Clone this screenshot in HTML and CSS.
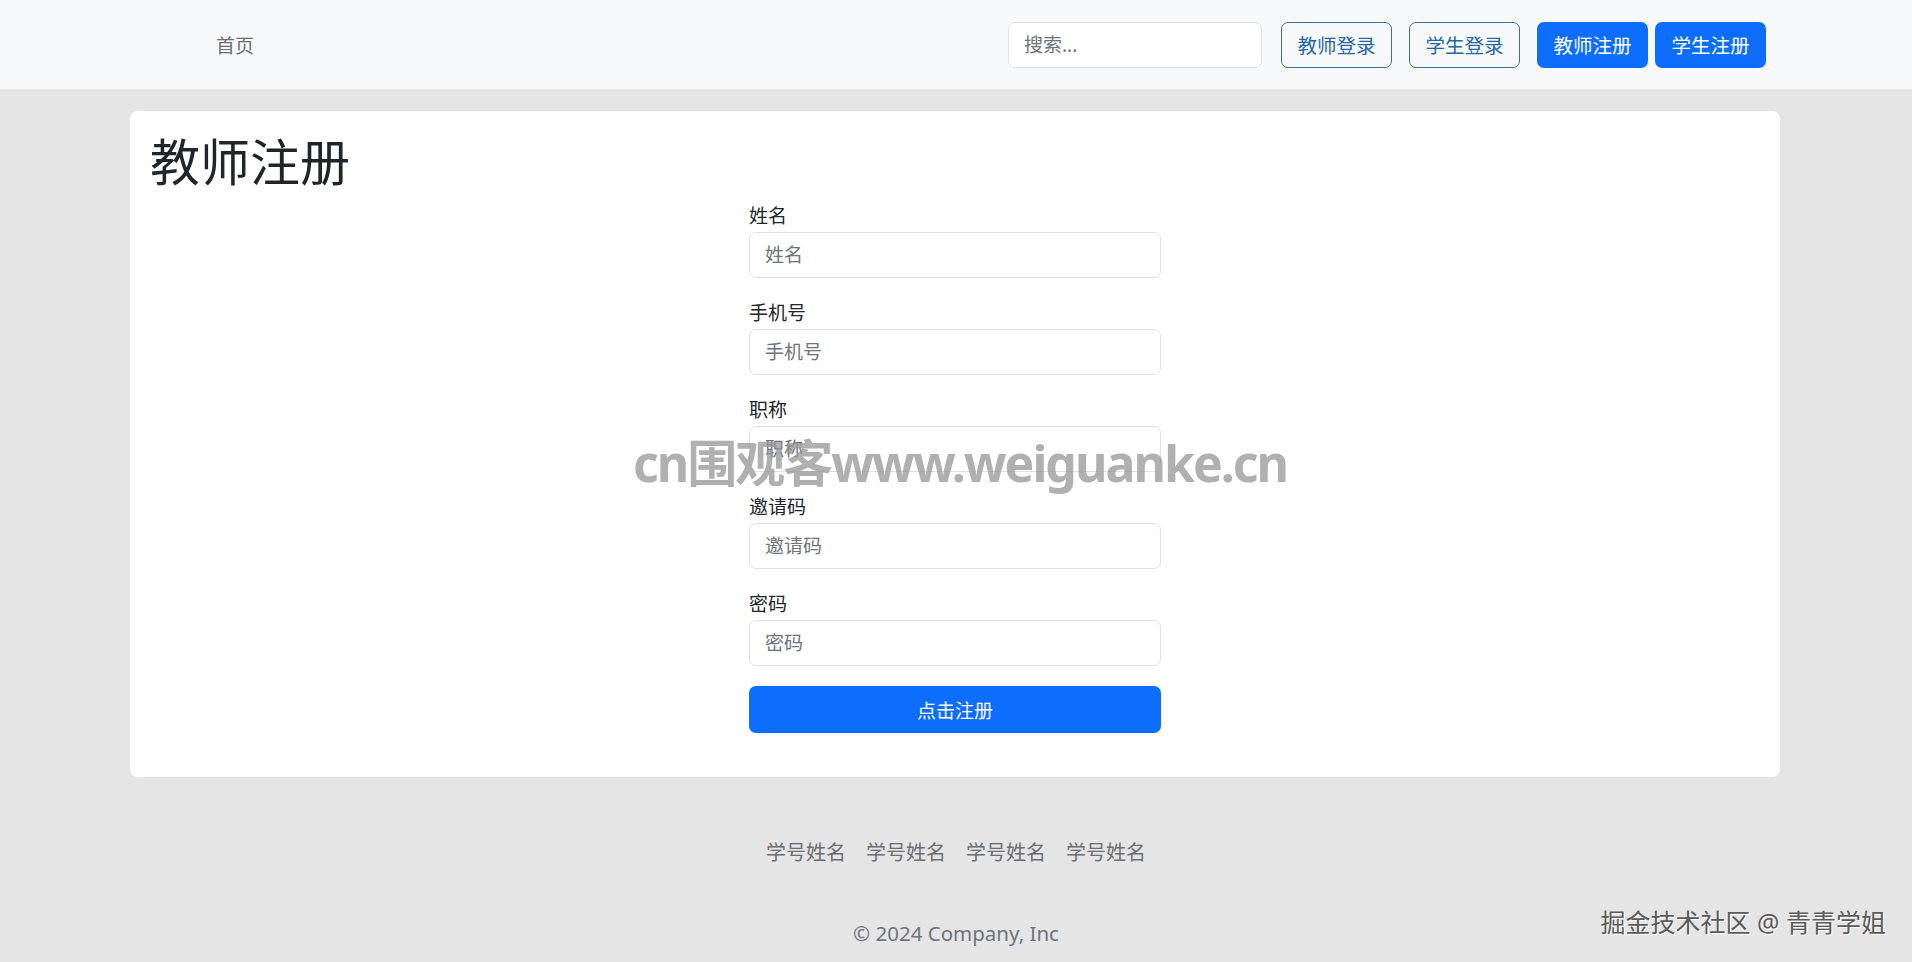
FILE: index.html
```html
<!DOCTYPE html>
<html lang="zh-CN">
<head>
  <meta charset="UTF-8">
  <meta name="viewport" content="width=device-width, initial-scale=1">
  <title>教师注册</title>
  <link rel="stylesheet" href="styles.css">
</head>
<body>

  <!-- 顶部导航 -->
  <header class="navbar">
    <a class="nav-home" href="#">首页</a>
    <div class="nav-right">
      <input class="search" type="search" placeholder="搜索...">
      <a class="btn btn-outline" href="#">教师登录</a>
      <a class="btn btn-outline" href="#">学生登录</a>
      <a class="btn btn-primary btn-tight" href="#">教师注册</a>
      <a class="btn btn-primary" href="#">学生注册</a>
    </div>
  </header>

  <main class="card">
    <h1>教师注册</h1>
    <form class="register-form">
      <div class="field">
        <label for="name">姓名</label>
        <input type="text" id="name" placeholder="姓名">
      </div>
      <div class="field">
        <label for="phone">手机号</label>
        <input type="text" id="phone" placeholder="手机号">
      </div>
      <div class="field">
        <label for="title">职称</label>
        <input type="text" id="title" placeholder="职称">
      </div>
      <div class="field">
        <label for="code">邀请码</label>
        <input type="text" id="code" placeholder="邀请码">
      </div>
      <div class="field">
        <label for="pwd">密码</label>
        <input type="password" id="pwd" placeholder="密码">
      </div>
      <button type="submit" class="submit-btn">点击注册</button>
    </form>
  </main>

  <footer class="footer">
    <ul class="footer-links">
      <li><a href="#">学号姓名</a></li>
      <li><a href="#">学号姓名</a></li>
      <li><a href="#">学号姓名</a></li>
      <li><a href="#">学号姓名</a></li>
    </ul>
    <p class="copyright">© 2024 Company, Inc</p>
  </footer>

  <!-- 截图水印 -->
  <div class="watermark">cn围观客www.weiguanke.cn</div>
  <div class="corner-mark">掘金技术社区 @ 青青学姐</div>

</body>
</html>
```

FILE: styles.css
```css
body {
  margin: 0;
  background: #e5e5e5;
  font-family: "Noto Sans", "Noto Sans CJK SC", sans-serif;
  color: #212529;
  min-height: 962px;
  position: relative;
}

a {
  text-decoration: none;
}

.navbar {
  height: 89px;
  background: #f8f9fa;
  display: flex;
  align-items: center;
  justify-content: space-between;
  padding: 0 146px 0 216px;
}

.nav-home {
  color: #6a6f74;
  font-size: 19px;
}

.nav-right {
  display: flex;
  align-items: center;
}

.search {
  width: 254px;
  height: 46px;
  box-sizing: border-box;
  border: 1px solid #dee2e6;
  border-radius: 7px;
  padding: 0 15px;
  font-size: 19px;
  font-family: inherit;
  margin-right: 19px;
  background: #fff;
}

.search::placeholder {
  color: #6c757d;
}

.btn {
  width: 111px;
  height: 46px;
  box-sizing: border-box;
  display: flex;
  align-items: center;
  justify-content: center;
  border-radius: 7px;
  font-size: 19.5px;
  margin-right: 17px;
}

.btn:last-child {
  margin-right: 0;
}

.btn-outline {
  border: 1px solid #3a70a0;
  color: #2467a6;
}

.btn-primary {
  background: #0d6efd;
  color: #fff;
}

.btn-tight {
  margin-right: 7px;
}

.card {
  display: block;
  margin: 22px 132px 0 130px;
  background: #fff;
  border-radius: 8px;
  padding: 21px 20px 44px;
}

.card h1 {
  margin: 0 0 9px;
  font-size: 50px;
  font-weight: 400;
  line-height: 60px;
}

.register-form {
  width: 412px;
  margin: 0 auto;
}

.field {
  margin-bottom: 20px;
}

.field label {
  display: block;
  font-size: 19px;
  line-height: 30px;
  margin-bottom: 1px;
}

.field input {
  display: block;
  width: 100%;
  height: 46px;
  box-sizing: border-box;
  border: 1px solid #dee2e6;
  border-radius: 7px;
  padding: 0 15px;
  font-size: 19px;
  font-family: inherit;
}

.field input::placeholder {
  color: #6c757d;
}

.submit-btn {
  display: block;
  width: 100%;
  height: 47px;
  border: none;
  border-radius: 7px;
  background: #0d6efd;
  color: #fff;
  font-size: 19px;
  font-family: inherit;
}

.footer {
  text-align: center;
  padding-top: 61px;
}

.footer-links {
  list-style: none;
  margin: 0;
  padding: 0;
  display: flex;
  justify-content: center;
}

.footer-links a {
  display: block;
  padding: 0 10px;
  color: #6a6f74;
  font-size: 20px;
  line-height: 29px;
}

.copyright {
  margin: 52px 0 0;
  color: #6c757d;
  font-size: 20.5px;
  line-height: 29px;
}

.watermark {
  position: absolute;
  left: 633px;
  top: 424px;
  font-size: 50px;
  font-weight: 700;
  color: rgba(150, 150, 150, 0.75);
  letter-spacing: -2px;
  white-space: nowrap;
}

.corner-mark {
  position: absolute;
  right: 26px;
  top: 903px;
  font-size: 25px;
  color: #5a5a5a;
  text-shadow: 1px 1px 0 #fff;
  white-space: nowrap;
}
```
